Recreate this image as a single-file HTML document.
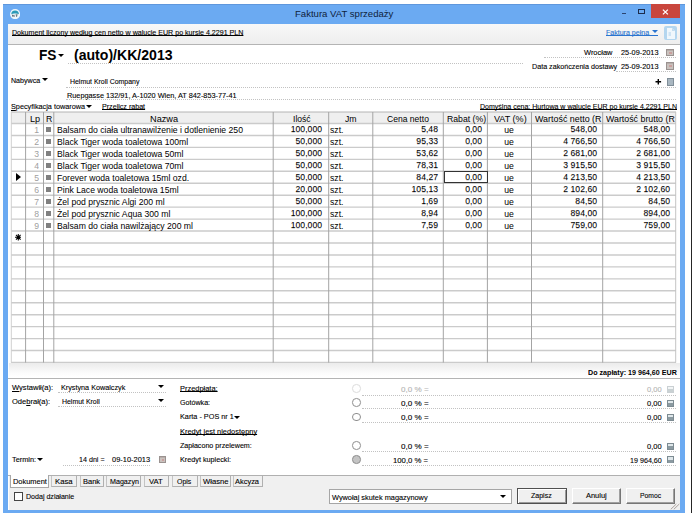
<!DOCTYPE html>
<html><head><meta charset="utf-8"><title>Faktura VAT sprzedaży</title>
<style>
html,body{margin:0;padding:0;background:#fff;}
body{width:692px;height:513px;position:relative;overflow:hidden;font-family:"Liberation Sans",sans-serif;font-size:7.05px;color:#000;}
.a{position:absolute;white-space:nowrap;line-height:1;}
.dot{position:absolute;height:0;border-top:1px dotted #bdbdbd;}
.hl{position:absolute;height:1px;}
.vl{position:absolute;width:1px;}
.btn{position:absolute;box-sizing:border-box;border:1px solid #fff;border-right-color:#767676;border-bottom-color:#767676;background:#f0f0f0;box-shadow:inset -1px -1px 0 #a0a0a0;}
.radio{position:absolute;box-sizing:border-box;border:1px solid #8e8e8e;border-radius:50%;background:#fff;}
</style></head><body>

<div class="a" style="left:3px;top:3.9px;width:682px;height:512.1px;background:#6baaf2;"></div>
<div class="a" style="left:3px;top:3.7px;width:682px;height:1.0px;background:#5f97dc;"></div>
<div class="a" style="left:690.7px;top:0px;width:1.2999999999999545px;height:513px;background:#262626;"></div>
<div class="a" style="top:9.36px;font-size:9.5px;color:#0f1e3c;transform:scaleX(1.0073);transform-origin:left center;left:294.70px;">Faktura VAT sprzedaży</div>
<svg class="a" style="left:9.8px;top:9.1px;" width="10.2" height="10.2" viewBox="0 0 20 20"><circle cx="10" cy="10" r="10" fill="#eef6fb"/><path d="M2.5 10.5 A7.5 7.5 0 0 1 17.5 10.5 Q14 8.5 10 9 Q6 8.5 2.5 10.5Z" fill="#2a9ab8"/><path d="M5 15V11.5L8 15V11.5M11 11.5H15M13 11.5V15.5" stroke="#4a5a66" stroke-width="1.6" fill="none"/></svg>
<div class="a" style="left:650.6px;top:4px;width:29.5px;height:13.8px;background:#c9463d;"></div>
<svg class="a" style="left:662.2px;top:8.7px;" width="6.8" height="6" viewBox="0 0 6.8 6"><path d="M0.9 0.6 L5.9 5.4 M5.9 0.6 L0.9 5.4" stroke="#fff" stroke-width="1.3" fill="none"/></svg>
<div class="a" style="left:638.2px;top:8.6px;width:7px;height:5px;box-sizing:border-box;border:0.8px solid #1c2c4c;border-top-width:1.7px;"></div>
<div class="a" style="left:621.6px;top:12.6px;width:4.600000000000023px;height:1.3000000000000007px;background:#2b4470;"></div>
<div class="a" style="left:8px;top:24px;width:672px;height:486px;background:#fff;"></div>
<div class="a" style="left:8px;top:24px;width:672px;height:20px;background:linear-gradient(#f8f8f8,#eeeeee);"></div>
<div class="hl" style="left:8px;top:43.8px;width:672px;background:#b4b4b4;"></div>
<div class="a" style="top:28.56px;font-size:7.05px;color:#000;-webkit-text-stroke:0.1px #000;transform:scaleX(1.0064);transform-origin:left center;text-decoration:underline;text-decoration-thickness:0.7px;text-underline-offset:0.4px;text-decoration-skip-ink:none;left:12.20px;">Dokument liczony według cen netto w walucie EUR po kursie 4,2291 PLN</div>
<div class="a" style="top:28.56px;font-size:7.05px;color:#2a74d0;-webkit-text-stroke:0.1px #2a74d0;text-decoration:underline;text-decoration-thickness:0.7px;text-underline-offset:0.4px;text-decoration-skip-ink:none;left:606.00px;">Faktura pełna</div>
<div class="a" style="left:651.6px;top:30.2px;width:0;height:0;border-left:3.25px solid transparent;border-right:3.25px solid transparent;border-top:3.099999999999998px solid #2a74d0;"></div>
<div class="a" style="left:648px;top:34.9px;width:10px;height:0.7000000000000028px;background:#2a74d0;"></div>
<div class="a" style="left:664.3px;top:26px;width:12.300000000000068px;height:14.399999999999999px;background:#b4d6ef;border-radius:2px;"></div>
<svg class="a" style="left:666.5px;top:27.8px;" width="8" height="11" viewBox="0 0 8 11"><path d="M0 0H5L8 3V11H0Z" fill="#f0f7fc"/><path d="M5 0V3H8" fill="#c4ddef"/><path d="M1.5 5H4M1.5 7H4" stroke="#aed1ec" stroke-width="1"/></svg>
<div class="a" style="top:48.17px;font-size:14px;color:#000;transform:scaleX(0.9782);transform-origin:left center;font-weight:bold;left:39.20px;">FS</div>
<div class="a" style="left:57.9px;top:53.6px;width:0;height:0;border-left:3.2500000000000036px solid transparent;border-right:3.2500000000000036px solid transparent;border-top:3.299999999999997px solid #000;"></div>
<div class="a" style="top:48.17px;font-size:14px;color:#000;transform:scaleX(1.0058);transform-origin:left center;font-weight:bold;left:74.40px;">(auto)/KK/2013</div>
<div class="dot" style="left:68px;top:62.5px;width:455px;border-top-color:#c2c2c2;"></div>
<div class="a" style="top:49.06px;font-size:7.05px;color:#000;-webkit-text-stroke:0.1px #000;transform:scaleX(1.0561);transform-origin:left center;left:583.70px;">Wrocław</div>
<div class="a" style="top:49.06px;font-size:7.05px;color:#000;-webkit-text-stroke:0.1px #000;transform:scaleX(1.0403);transform-origin:left center;left:621.00px;">25-09-2013</div>
<div class="a" style="left:666.2px;top:48.9px;width:8.199999999999932px;height:7.200000000000003px;background:#c9c2be;border:1px solid #9a9290;box-sizing:border-box;"></div>
<div class="a" style="left:667.2px;top:49.9px;width:6.199999999999932px;height:1.2000000000000028px;background:#b8aeaa;"></div>
<div class="a" style="left:669.0px;top:52.1px;width:2.6000000000000227px;height:1.7999999999999972px;background:#c9a09e;"></div>
<div class="dot" style="left:544px;top:57.1px;width:132px;border-top-color:#c2c2c2;"></div>
<div class="a" style="top:62.96px;font-size:7.05px;color:#000;-webkit-text-stroke:0.1px #000;transform:scaleX(1.0164);transform-origin:left center;left:531.70px;">Data zakończenia dostawy</div>
<div class="a" style="top:62.96px;font-size:7.05px;color:#000;-webkit-text-stroke:0.1px #000;transform:scaleX(1.0403);transform-origin:left center;left:621.00px;">25-09-2013</div>
<div class="a" style="left:666.2px;top:62.2px;width:8.199999999999932px;height:7.5px;background:#c9c2be;border:1px solid #9a9290;box-sizing:border-box;"></div>
<div class="a" style="left:667.2px;top:63.2px;width:6.199999999999932px;height:1.2000000000000028px;background:#b8aeaa;"></div>
<div class="a" style="left:669.0px;top:65.4px;width:2.6000000000000227px;height:2.0999999999999943px;background:#c9a09e;"></div>
<div class="dot" style="left:616px;top:70.5px;width:60px;border-top-color:#c2c2c2;"></div>
<div class="a" style="top:76.56px;font-size:7.05px;color:#000;-webkit-text-stroke:0.1px #000;transform:scaleX(1.004);transform-origin:left center;left:11.20px;">Nabywca</div>
<div class="a" style="left:41.6px;top:78.4px;width:0;height:0;border-left:3.1499999999999986px solid transparent;border-right:3.1499999999999986px solid transparent;border-top:3.299999999999997px solid #000;"></div>
<div class="a" style="top:78.26px;font-size:7.05px;color:#000;-webkit-text-stroke:0.1px #000;transform:scaleX(0.9844);transform-origin:left center;left:69.70px;">Helmut Kroll Company</div>
<div class="dot" style="left:66px;top:87.2px;width:610px;border-top-color:#c2c2c2;"></div>
<svg class="a" style="left:654px;top:77px;" width="9" height="9" viewBox="0 0 9 9"><path d="M1.5 4.8H7.1M4.3 2V7.6" stroke="#000" stroke-width="1.4" fill="none"/></svg>
<div class="a" style="left:666.9px;top:78px;width:6.899999999999977px;height:7.799999999999997px;background:#a9b7c1;border:1px solid #808e98;box-sizing:border-box;"></div>
<div class="a" style="top:91.86px;font-size:7.05px;color:#000;-webkit-text-stroke:0.1px #000;transform:scaleX(1.0379);transform-origin:left center;left:67.40px;">Ruepgasse 132/91, A-1020 Wien, AT 842-853-77-41</div>
<div class="dot" style="left:66px;top:98.9px;width:610px;border-top-color:#c2c2c2;"></div>
<div class="a" style="top:103.26px;font-size:7.05px;color:#000;-webkit-text-stroke:0.1px #000;transform:scaleX(1.0337);transform-origin:left center;left:11.20px;"><span style="text-decoration:underline">S</span>pecyfikacja towarowa</div>
<div class="a" style="left:86.39999999999999px;top:105px;width:0;height:0;border-left:3.250000000000007px solid transparent;border-right:3.250000000000007px solid transparent;border-top:3.299999999999997px solid #000;"></div>
<div class="a" style="top:103.26px;font-size:7.05px;color:#000;-webkit-text-stroke:0.1px #000;transform:scaleX(1.0097);transform-origin:left center;text-decoration:underline;text-decoration-thickness:0.7px;text-underline-offset:0.4px;text-decoration-skip-ink:none;left:102.20px;">Przelicz rabat</div>
<div class="a" style="top:103.06px;font-size:7.05px;color:#000;-webkit-text-stroke:0.1px #000;transform:scaleX(0.996);transform-origin:left center;text-decoration:underline;text-decoration-thickness:0.7px;text-underline-offset:0.4px;text-decoration-skip-ink:none;left:479.70px;">Domyślna cena: Hurtowa w walucie EUR po kursie 4,2291 PLN</div>
<svg class="a" style="left:0;top:0;" width="692" height="400" viewBox="0 0 692 400"><rect x="11" y="112" width="665" height="250.60000000000002" fill="#fff"/><rect x="11" y="112" width="665" height="11.5" fill="#efefef"/><path d="M11 112H676" stroke="#b4b4b4" stroke-width="1"/><path d="M11 123.50H676M11 135.45H676M11 147.40H676M11 159.35H676M11 171.30H676M11 183.25H676M11 195.20H676M11 207.15H676M11 219.10H676M11 231.05H676M11 243.00H676M11 254.95H676M11 266.90H676M11 278.85H676M11 290.80H676M11 302.75H676M11 314.70H676M11 326.65H676M11 338.60H676M11 350.55H676M11 362.50H676" stroke="#cbcbcb" stroke-width="1.4" fill="none"/><path d="M11.3 112V362.6" stroke="#d0d0d0" stroke-width="1" fill="none"/><path d="M25.6 112V362.6M43.5 112V362.6M53.8 112V362.6M273.2 112V362.6M328.7 112V362.6M372.8 112V362.6M443.3 112V362.6M487.4 112V362.6M531.5 112V362.6M602.7 112V362.6" stroke="#a4a4a4" stroke-width="1" fill="none"/><path d="M675.7 112V362.6" stroke="#c4c4c4" stroke-width="1" fill="none"/></svg>
<div class="a" style="top:114.51px;font-size:8.8px;color:#000;transform:scaleX(1.0309);transform-origin:left center;left:30.20px;">Lp</div>
<div class="a" style="top:114.51px;font-size:8.8px;color:#000;transform:scaleX(0.9907);transform-origin:left center;left:46.20px;">R</div>
<div class="a" style="top:114.51px;font-size:8.8px;color:#000;transform:scaleX(1.045);transform-origin:left center;left:149.70px;">Nazwa</div>
<div class="a" style="top:114.51px;font-size:8.8px;color:#000;transform:scaleX(0.9727);transform-origin:left center;left:292.50px;">Ilość</div>
<div class="a" style="top:114.51px;font-size:8.8px;color:#000;transform:scaleX(0.9885);transform-origin:left center;left:345.10px;">Jm</div>
<div class="a" style="top:114.51px;font-size:8.8px;color:#000;transform:scaleX(0.9734);transform-origin:left center;left:387.40px;">Cena netto</div>
<div class="a" style="top:114.51px;font-size:8.8px;color:#000;transform:scaleX(0.9871);transform-origin:left center;left:446.50px;">Rabat (%)</div>
<div class="a" style="top:114.51px;font-size:8.8px;color:#000;transform:scaleX(1.0289);transform-origin:left center;left:494.00px;">VAT (%)</div>
<div class="a" style="top:114.51px;font-size:8.8px;color:#000;transform:scaleX(1.0126);transform-origin:left center;left:535.00px;">Wartość netto (R</div>
<div class="a" style="top:114.51px;font-size:8.8px;color:#000;transform:scaleX(1.0028);transform-origin:left center;left:605.50px;">Wartość brutto (R</div>
<div class="a" style="top:124.96px;font-size:9.5px;color:#a0a0a0;transform:scaleX(0.91);transform-origin:right center;left:-360.60px;width:400px;text-align:right;">1</div>
<div class="a" style="left:46px;top:127.1px;width:5px;height:5.0px;background:#808080;"></div>
<div class="a" style="top:124.96px;font-size:9.5px;color:#000;transform:scaleX(0.91);transform-origin:left center;left:57.00px;">Balsam do ciała ultranawilżenie i dotlenienie 250</div>
<div class="a" style="top:124.46px;font-size:9.5px;color:#000;transform:scaleX(0.91);transform-origin:right center;left:-77.70px;width:400px;text-align:right;text-shadow:0 0.8px 0.4px rgba(0,0,0,.18);">100,000</div>
<div class="a" style="top:124.96px;font-size:9.5px;color:#000;transform:scaleX(0.91);transform-origin:left center;left:330.30px;">szt.</div>
<div class="a" style="top:124.46px;font-size:9.5px;color:#000;transform:scaleX(0.91);transform-origin:right center;left:37.80px;width:400px;text-align:right;text-shadow:0 0.8px 0.4px rgba(0,0,0,.18);">5,48</div>
<div class="a" style="top:124.46px;font-size:9.5px;color:#000;transform:scaleX(0.91);transform-origin:right center;left:81.70px;width:400px;text-align:right;text-shadow:0 0.8px 0.4px rgba(0,0,0,.18);">0,00</div>
<div class="a" style="top:124.96px;font-size:9.5px;color:#000;transform:scaleX(0.91);transform-origin:center center;left:309.45px;width:400px;text-align:center;">ue</div>
<div class="a" style="top:124.46px;font-size:9.5px;color:#000;transform:scaleX(0.91);transform-origin:right center;left:196.60px;width:400px;text-align:right;text-shadow:0 0.8px 0.4px rgba(0,0,0,.18);">548,00</div>
<div class="a" style="top:124.46px;font-size:9.5px;color:#000;transform:scaleX(0.91);transform-origin:right center;left:269.90px;width:400px;text-align:right;text-shadow:0 0.8px 0.4px rgba(0,0,0,.18);">548,00</div>
<div class="a" style="top:136.96px;font-size:9.5px;color:#a0a0a0;transform:scaleX(0.91);transform-origin:right center;left:-360.60px;width:400px;text-align:right;">2</div>
<div class="a" style="left:46px;top:139.1px;width:5px;height:5.0px;background:#808080;"></div>
<div class="a" style="top:136.96px;font-size:9.5px;color:#000;transform:scaleX(0.91);transform-origin:left center;left:57.00px;">Black Tiger woda toaletowa 100ml</div>
<div class="a" style="top:136.46px;font-size:9.5px;color:#000;transform:scaleX(0.91);transform-origin:right center;left:-77.70px;width:400px;text-align:right;text-shadow:0 0.8px 0.4px rgba(0,0,0,.18);">50,000</div>
<div class="a" style="top:136.96px;font-size:9.5px;color:#000;transform:scaleX(0.91);transform-origin:left center;left:330.30px;">szt.</div>
<div class="a" style="top:136.46px;font-size:9.5px;color:#000;transform:scaleX(0.91);transform-origin:right center;left:37.80px;width:400px;text-align:right;text-shadow:0 0.8px 0.4px rgba(0,0,0,.18);">95,33</div>
<div class="a" style="top:136.46px;font-size:9.5px;color:#000;transform:scaleX(0.91);transform-origin:right center;left:81.70px;width:400px;text-align:right;text-shadow:0 0.8px 0.4px rgba(0,0,0,.18);">0,00</div>
<div class="a" style="top:136.96px;font-size:9.5px;color:#000;transform:scaleX(0.91);transform-origin:center center;left:309.45px;width:400px;text-align:center;">ue</div>
<div class="a" style="top:136.46px;font-size:9.5px;color:#000;transform:scaleX(0.91);transform-origin:right center;left:196.60px;width:400px;text-align:right;text-shadow:0 0.8px 0.4px rgba(0,0,0,.18);">4 766,50</div>
<div class="a" style="top:136.46px;font-size:9.5px;color:#000;transform:scaleX(0.91);transform-origin:right center;left:269.90px;width:400px;text-align:right;text-shadow:0 0.8px 0.4px rgba(0,0,0,.18);">4 766,50</div>
<div class="a" style="top:148.96px;font-size:9.5px;color:#a0a0a0;transform:scaleX(0.91);transform-origin:right center;left:-360.60px;width:400px;text-align:right;">3</div>
<div class="a" style="left:46px;top:151.1px;width:5px;height:5.0px;background:#808080;"></div>
<div class="a" style="top:148.96px;font-size:9.5px;color:#000;transform:scaleX(0.91);transform-origin:left center;left:57.00px;">Black Tiger woda toaletowa 50ml</div>
<div class="a" style="top:148.46px;font-size:9.5px;color:#000;transform:scaleX(0.91);transform-origin:right center;left:-77.70px;width:400px;text-align:right;text-shadow:0 0.8px 0.4px rgba(0,0,0,.18);">50,000</div>
<div class="a" style="top:148.96px;font-size:9.5px;color:#000;transform:scaleX(0.91);transform-origin:left center;left:330.30px;">szt.</div>
<div class="a" style="top:148.46px;font-size:9.5px;color:#000;transform:scaleX(0.91);transform-origin:right center;left:37.80px;width:400px;text-align:right;text-shadow:0 0.8px 0.4px rgba(0,0,0,.18);">53,62</div>
<div class="a" style="top:148.46px;font-size:9.5px;color:#000;transform:scaleX(0.91);transform-origin:right center;left:81.70px;width:400px;text-align:right;text-shadow:0 0.8px 0.4px rgba(0,0,0,.18);">0,00</div>
<div class="a" style="top:148.96px;font-size:9.5px;color:#000;transform:scaleX(0.91);transform-origin:center center;left:309.45px;width:400px;text-align:center;">ue</div>
<div class="a" style="top:148.46px;font-size:9.5px;color:#000;transform:scaleX(0.91);transform-origin:right center;left:196.60px;width:400px;text-align:right;text-shadow:0 0.8px 0.4px rgba(0,0,0,.18);">2 681,00</div>
<div class="a" style="top:148.46px;font-size:9.5px;color:#000;transform:scaleX(0.91);transform-origin:right center;left:269.90px;width:400px;text-align:right;text-shadow:0 0.8px 0.4px rgba(0,0,0,.18);">2 681,00</div>
<div class="a" style="top:160.96px;font-size:9.5px;color:#a0a0a0;transform:scaleX(0.91);transform-origin:right center;left:-360.60px;width:400px;text-align:right;">4</div>
<div class="a" style="left:46px;top:163.1px;width:5px;height:5.0px;background:#808080;"></div>
<div class="a" style="top:160.96px;font-size:9.5px;color:#000;transform:scaleX(0.91);transform-origin:left center;left:57.00px;">Black Tiger woda toaletowa 70ml</div>
<div class="a" style="top:160.46px;font-size:9.5px;color:#000;transform:scaleX(0.91);transform-origin:right center;left:-77.70px;width:400px;text-align:right;text-shadow:0 0.8px 0.4px rgba(0,0,0,.18);">50,000</div>
<div class="a" style="top:160.96px;font-size:9.5px;color:#000;transform:scaleX(0.91);transform-origin:left center;left:330.30px;">szt.</div>
<div class="a" style="top:160.46px;font-size:9.5px;color:#000;transform:scaleX(0.91);transform-origin:right center;left:37.80px;width:400px;text-align:right;text-shadow:0 0.8px 0.4px rgba(0,0,0,.18);">78,31</div>
<div class="a" style="top:160.46px;font-size:9.5px;color:#000;transform:scaleX(0.91);transform-origin:right center;left:81.70px;width:400px;text-align:right;text-shadow:0 0.8px 0.4px rgba(0,0,0,.18);">0,00</div>
<div class="a" style="top:160.96px;font-size:9.5px;color:#000;transform:scaleX(0.91);transform-origin:center center;left:309.45px;width:400px;text-align:center;">ue</div>
<div class="a" style="top:160.46px;font-size:9.5px;color:#000;transform:scaleX(0.91);transform-origin:right center;left:196.60px;width:400px;text-align:right;text-shadow:0 0.8px 0.4px rgba(0,0,0,.18);">3 915,50</div>
<div class="a" style="top:160.46px;font-size:9.5px;color:#000;transform:scaleX(0.91);transform-origin:right center;left:269.90px;width:400px;text-align:right;text-shadow:0 0.8px 0.4px rgba(0,0,0,.18);">3 915,50</div>
<div class="a" style="top:172.96px;font-size:9.5px;color:#a0a0a0;transform:scaleX(0.91);transform-origin:right center;left:-360.60px;width:400px;text-align:right;">5</div>
<div class="a" style="left:46px;top:175.1px;width:5px;height:5.0px;background:#808080;"></div>
<div class="a" style="top:172.96px;font-size:9.5px;color:#000;transform:scaleX(0.91);transform-origin:left center;left:57.00px;">Forever woda toaletowa 15ml ozd.</div>
<div class="a" style="top:172.46px;font-size:9.5px;color:#000;transform:scaleX(0.91);transform-origin:right center;left:-77.70px;width:400px;text-align:right;text-shadow:0 0.8px 0.4px rgba(0,0,0,.18);">50,000</div>
<div class="a" style="top:172.96px;font-size:9.5px;color:#000;transform:scaleX(0.91);transform-origin:left center;left:330.30px;">szt.</div>
<div class="a" style="top:172.46px;font-size:9.5px;color:#000;transform:scaleX(0.91);transform-origin:right center;left:37.80px;width:400px;text-align:right;text-shadow:0 0.8px 0.4px rgba(0,0,0,.18);">84,27</div>
<div class="a" style="top:172.46px;font-size:9.5px;color:#000;transform:scaleX(0.91);transform-origin:right center;left:81.70px;width:400px;text-align:right;text-shadow:0 0.8px 0.4px rgba(0,0,0,.18);">0,00</div>
<div class="a" style="top:172.96px;font-size:9.5px;color:#000;transform:scaleX(0.91);transform-origin:center center;left:309.45px;width:400px;text-align:center;">ue</div>
<div class="a" style="top:172.46px;font-size:9.5px;color:#000;transform:scaleX(0.91);transform-origin:right center;left:196.60px;width:400px;text-align:right;text-shadow:0 0.8px 0.4px rgba(0,0,0,.18);">4 213,50</div>
<div class="a" style="top:172.46px;font-size:9.5px;color:#000;transform:scaleX(0.91);transform-origin:right center;left:269.90px;width:400px;text-align:right;text-shadow:0 0.8px 0.4px rgba(0,0,0,.18);">4 213,50</div>
<div class="a" style="top:184.96px;font-size:9.5px;color:#a0a0a0;transform:scaleX(0.91);transform-origin:right center;left:-360.60px;width:400px;text-align:right;">6</div>
<div class="a" style="left:46px;top:187.1px;width:5px;height:5.0px;background:#808080;"></div>
<div class="a" style="top:184.96px;font-size:9.5px;color:#000;transform:scaleX(0.91);transform-origin:left center;left:57.00px;">Pink Lace woda toaletowa 15ml</div>
<div class="a" style="top:184.46px;font-size:9.5px;color:#000;transform:scaleX(0.91);transform-origin:right center;left:-77.70px;width:400px;text-align:right;text-shadow:0 0.8px 0.4px rgba(0,0,0,.18);">20,000</div>
<div class="a" style="top:184.96px;font-size:9.5px;color:#000;transform:scaleX(0.91);transform-origin:left center;left:330.30px;">szt.</div>
<div class="a" style="top:184.46px;font-size:9.5px;color:#000;transform:scaleX(0.91);transform-origin:right center;left:37.80px;width:400px;text-align:right;text-shadow:0 0.8px 0.4px rgba(0,0,0,.18);">105,13</div>
<div class="a" style="top:184.46px;font-size:9.5px;color:#000;transform:scaleX(0.91);transform-origin:right center;left:81.70px;width:400px;text-align:right;text-shadow:0 0.8px 0.4px rgba(0,0,0,.18);">0,00</div>
<div class="a" style="top:184.96px;font-size:9.5px;color:#000;transform:scaleX(0.91);transform-origin:center center;left:309.45px;width:400px;text-align:center;">ue</div>
<div class="a" style="top:184.46px;font-size:9.5px;color:#000;transform:scaleX(0.91);transform-origin:right center;left:196.60px;width:400px;text-align:right;text-shadow:0 0.8px 0.4px rgba(0,0,0,.18);">2 102,60</div>
<div class="a" style="top:184.46px;font-size:9.5px;color:#000;transform:scaleX(0.91);transform-origin:right center;left:269.90px;width:400px;text-align:right;text-shadow:0 0.8px 0.4px rgba(0,0,0,.18);">2 102,60</div>
<div class="a" style="top:196.96px;font-size:9.5px;color:#a0a0a0;transform:scaleX(0.91);transform-origin:right center;left:-360.60px;width:400px;text-align:right;">7</div>
<div class="a" style="left:46px;top:199.1px;width:5px;height:5.0px;background:#808080;"></div>
<div class="a" style="top:196.96px;font-size:9.5px;color:#000;transform:scaleX(0.91);transform-origin:left center;left:57.00px;">Żel pod prysznic Algi 200 ml</div>
<div class="a" style="top:196.46px;font-size:9.5px;color:#000;transform:scaleX(0.91);transform-origin:right center;left:-77.70px;width:400px;text-align:right;text-shadow:0 0.8px 0.4px rgba(0,0,0,.18);">50,000</div>
<div class="a" style="top:196.96px;font-size:9.5px;color:#000;transform:scaleX(0.91);transform-origin:left center;left:330.30px;">szt.</div>
<div class="a" style="top:196.46px;font-size:9.5px;color:#000;transform:scaleX(0.91);transform-origin:right center;left:37.80px;width:400px;text-align:right;text-shadow:0 0.8px 0.4px rgba(0,0,0,.18);">1,69</div>
<div class="a" style="top:196.46px;font-size:9.5px;color:#000;transform:scaleX(0.91);transform-origin:right center;left:81.70px;width:400px;text-align:right;text-shadow:0 0.8px 0.4px rgba(0,0,0,.18);">0,00</div>
<div class="a" style="top:196.96px;font-size:9.5px;color:#000;transform:scaleX(0.91);transform-origin:center center;left:309.45px;width:400px;text-align:center;">ue</div>
<div class="a" style="top:196.46px;font-size:9.5px;color:#000;transform:scaleX(0.91);transform-origin:right center;left:196.60px;width:400px;text-align:right;text-shadow:0 0.8px 0.4px rgba(0,0,0,.18);">84,50</div>
<div class="a" style="top:196.46px;font-size:9.5px;color:#000;transform:scaleX(0.91);transform-origin:right center;left:269.90px;width:400px;text-align:right;text-shadow:0 0.8px 0.4px rgba(0,0,0,.18);">84,50</div>
<div class="a" style="top:208.96px;font-size:9.5px;color:#a0a0a0;transform:scaleX(0.91);transform-origin:right center;left:-360.60px;width:400px;text-align:right;">8</div>
<div class="a" style="left:46px;top:211.1px;width:5px;height:5.0px;background:#808080;"></div>
<div class="a" style="top:208.96px;font-size:9.5px;color:#000;transform:scaleX(0.91);transform-origin:left center;left:57.00px;">Żel pod prysznic Aqua 300 ml</div>
<div class="a" style="top:208.46px;font-size:9.5px;color:#000;transform:scaleX(0.91);transform-origin:right center;left:-77.70px;width:400px;text-align:right;text-shadow:0 0.8px 0.4px rgba(0,0,0,.18);">100,000</div>
<div class="a" style="top:208.96px;font-size:9.5px;color:#000;transform:scaleX(0.91);transform-origin:left center;left:330.30px;">szt.</div>
<div class="a" style="top:208.46px;font-size:9.5px;color:#000;transform:scaleX(0.91);transform-origin:right center;left:37.80px;width:400px;text-align:right;text-shadow:0 0.8px 0.4px rgba(0,0,0,.18);">8,94</div>
<div class="a" style="top:208.46px;font-size:9.5px;color:#000;transform:scaleX(0.91);transform-origin:right center;left:81.70px;width:400px;text-align:right;text-shadow:0 0.8px 0.4px rgba(0,0,0,.18);">0,00</div>
<div class="a" style="top:208.96px;font-size:9.5px;color:#000;transform:scaleX(0.91);transform-origin:center center;left:309.45px;width:400px;text-align:center;">ue</div>
<div class="a" style="top:208.46px;font-size:9.5px;color:#000;transform:scaleX(0.91);transform-origin:right center;left:196.60px;width:400px;text-align:right;text-shadow:0 0.8px 0.4px rgba(0,0,0,.18);">894,00</div>
<div class="a" style="top:208.46px;font-size:9.5px;color:#000;transform:scaleX(0.91);transform-origin:right center;left:269.90px;width:400px;text-align:right;text-shadow:0 0.8px 0.4px rgba(0,0,0,.18);">894,00</div>
<div class="a" style="top:220.96px;font-size:9.5px;color:#a0a0a0;transform:scaleX(0.91);transform-origin:right center;left:-360.60px;width:400px;text-align:right;">9</div>
<div class="a" style="left:46px;top:223.1px;width:5px;height:5.0px;background:#808080;"></div>
<div class="a" style="top:220.96px;font-size:9.5px;color:#000;transform:scaleX(0.91);transform-origin:left center;left:57.00px;">Balsam do ciała nawilżający 200 ml</div>
<div class="a" style="top:220.46px;font-size:9.5px;color:#000;transform:scaleX(0.91);transform-origin:right center;left:-77.70px;width:400px;text-align:right;text-shadow:0 0.8px 0.4px rgba(0,0,0,.18);">100,000</div>
<div class="a" style="top:220.96px;font-size:9.5px;color:#000;transform:scaleX(0.91);transform-origin:left center;left:330.30px;">szt.</div>
<div class="a" style="top:220.46px;font-size:9.5px;color:#000;transform:scaleX(0.91);transform-origin:right center;left:37.80px;width:400px;text-align:right;text-shadow:0 0.8px 0.4px rgba(0,0,0,.18);">7,59</div>
<div class="a" style="top:220.46px;font-size:9.5px;color:#000;transform:scaleX(0.91);transform-origin:right center;left:81.70px;width:400px;text-align:right;text-shadow:0 0.8px 0.4px rgba(0,0,0,.18);">0,00</div>
<div class="a" style="top:220.96px;font-size:9.5px;color:#000;transform:scaleX(0.91);transform-origin:center center;left:309.45px;width:400px;text-align:center;">ue</div>
<div class="a" style="top:220.46px;font-size:9.5px;color:#000;transform:scaleX(0.91);transform-origin:right center;left:196.60px;width:400px;text-align:right;text-shadow:0 0.8px 0.4px rgba(0,0,0,.18);">759,00</div>
<div class="a" style="top:220.46px;font-size:9.5px;color:#000;transform:scaleX(0.91);transform-origin:right center;left:269.90px;width:400px;text-align:right;text-shadow:0 0.8px 0.4px rgba(0,0,0,.18);">759,00</div>
<div class="a" style="left:16px;top:173.3px;width:0;height:0;border-top:4.2px solid transparent;border-bottom:4.2px solid transparent;border-left:5px solid #000;"></div>
<div class="a" style="left:443.5px;top:171px;width:44.5px;height:12px;border:1px solid #333;box-sizing:border-box;"></div>
<svg class="a" style="left:14.8px;top:234px;" width="6.6" height="6.6" viewBox="0 0 10 10"><path d="M5 0V10M0 5H10M1.5 1.5L8.5 8.5M8.5 1.5L1.5 8.5" stroke="#000" stroke-width="1.6"/><circle cx="5" cy="5" r="2" fill="#000"/></svg>
<div class="a" style="left:8.6px;top:363.1px;width:671.0px;height:14.399999999999977px;background:linear-gradient(#ebebeb,#fbfbfb 70%,#fff);"></div>
<div class="a" style="top:368.56px;font-size:7.05px;color:#000;transform:scaleX(1.0121);transform-origin:left center;font-weight:bold;left:587.50px;">Do zapłaty: 19 964,60 EUR</div>
<div class="hl" style="left:8px;top:377.5px;width:672px;background:#b4b4b4;"></div>
<div class="a" style="top:383.56px;font-size:7.05px;color:#000;-webkit-text-stroke:0.1px #000;transform:scaleX(1.0728);transform-origin:left center;left:12.20px;"><span style="text-decoration:underline">W</span>ystawił(a):</div>
<div class="a" style="top:383.56px;font-size:7.05px;color:#000;-webkit-text-stroke:0.1px #000;transform:scaleX(1.026);transform-origin:left center;left:60.50px;">Krystyna Kowalczyk</div>
<div class="a" style="left:157.6px;top:385px;width:0;height:0;border-left:3.6500000000000057px solid transparent;border-right:3.6500000000000057px solid transparent;border-top:3.6000000000000227px solid #000;"></div>
<div class="dot" style="left:58px;top:392.2px;width:108px;border-top-color:#c2c2c2;"></div>
<div class="a" style="top:397.56px;font-size:7.05px;color:#000;-webkit-text-stroke:0.1px #000;transform:scaleX(1.0685);transform-origin:left center;left:12.20px;">Ode<span style="text-decoration:underline">b</span>rał(a):</div>
<div class="a" style="top:397.56px;font-size:7.05px;color:#000;-webkit-text-stroke:0.1px #000;transform:scaleX(0.9846);transform-origin:left center;left:62.20px;">Helmut Kroll</div>
<div class="a" style="left:157.6px;top:399.3px;width:0;height:0;border-left:3.6500000000000057px solid transparent;border-right:3.6500000000000057px solid transparent;border-top:3.6000000000000227px solid #000;"></div>
<div class="dot" style="left:58px;top:406.3px;width:108px;border-top-color:#c2c2c2;"></div>
<div class="a" style="top:456.16px;font-size:7.05px;color:#000;-webkit-text-stroke:0.1px #000;transform:scaleX(1.0429);transform-origin:left center;left:12.20px;">Termin:</div>
<div class="a" style="left:37.1px;top:458px;width:0;height:0;border-left:3.25px solid transparent;border-right:3.25px solid transparent;border-top:3.3000000000000114px solid #000;"></div>
<div class="a" style="top:456.16px;font-size:7.05px;color:#000;-webkit-text-stroke:0.1px #000;transform:scaleX(1.0126);transform-origin:left center;left:78.50px;">14 dni =</div>
<div class="a" style="top:456.16px;font-size:7.05px;color:#000;-webkit-text-stroke:0.1px #000;transform:scaleX(1.057);transform-origin:left center;left:111.70px;">09-10-2013</div>
<div class="a" style="left:159.2px;top:455.8px;width:7.200000000000017px;height:7.699999999999989px;background:#c9c2be;border:1px solid #9a9290;box-sizing:border-box;"></div>
<div class="a" style="left:160.2px;top:456.8px;width:5.200000000000017px;height:1.1999999999999886px;background:#b8aeaa;"></div>
<div class="a" style="left:162.0px;top:459.0px;width:1.5999999999999943px;height:2.3000000000000114px;background:#c9a09e;"></div>
<div class="dot" style="left:62.5px;top:465.0px;width:87.5px;border-top-color:#c2c2c2;"></div>
<div class="a" style="top:385.36px;font-size:7.05px;color:#000;-webkit-text-stroke:0.1px #000;transform:scaleX(1.0545);transform-origin:left center;text-decoration:underline;text-decoration-thickness:0.7px;text-underline-offset:0.4px;text-decoration-skip-ink:none;left:180.20px;">Przedpłata:</div>
<div class="radio" style="left:352.2px;top:384.4px;width:8.6px;height:8.6px;border-color:#dcdcdc;background:#fff;"></div>
<div class="a" style="top:385.76px;font-size:7.05px;color:#b4b4b4;-webkit-text-stroke:0.1px #b4b4b4;transform:scaleX(1.1455);transform-origin:left center;left:400.70px;">0,0 % =</div>
<div class="a" style="top:385.76px;font-size:7.05px;color:#b4b4b4;-webkit-text-stroke:0.1px #b4b4b4;transform:scaleX(1.0642);transform-origin:left center;left:646.70px;">0,00</div>
<div class="a" style="left:667.2px;top:385.5px;width:6.899999999999977px;height:7.199999999999989px;background:#dfe7ea;border:1px solid #7d8b92;box-sizing:border-box;opacity:0.4;"></div>
<div class="a" style="left:668.2px;top:388.7px;width:4.899999999999977px;height:3.0px;background:#8b9aa1;opacity:0.4;"></div>
<div class="dot" style="left:362px;top:394.5px;width:314px;border-top-color:#c2c2c2;"></div>
<div class="a" style="top:399.36px;font-size:7.05px;color:#000;-webkit-text-stroke:0.1px #000;transform:scaleX(1.0107);transform-origin:left center;left:180.20px;">Gotówka:</div>
<div class="radio" style="left:352.2px;top:398.4px;width:8.6px;height:8.6px;border-color:#8e8e8e;background:#fff;"></div>
<div class="a" style="top:399.76px;font-size:7.05px;color:#000;-webkit-text-stroke:0.1px #000;transform:scaleX(1.1455);transform-origin:left center;left:400.70px;">0,0 % =</div>
<div class="a" style="top:399.76px;font-size:7.05px;color:#000;-webkit-text-stroke:0.1px #000;transform:scaleX(1.0642);transform-origin:left center;left:646.70px;">0,00</div>
<div class="a" style="left:667.2px;top:399.5px;width:6.899999999999977px;height:7.199999999999989px;background:#dfe7ea;border:1px solid #7d8b92;box-sizing:border-box;opacity:1;"></div>
<div class="a" style="left:668.2px;top:402.7px;width:4.899999999999977px;height:3.0px;background:#8b9aa1;opacity:1;"></div>
<div class="dot" style="left:362px;top:408.3px;width:314px;border-top-color:#c2c2c2;"></div>
<div class="a" style="top:413.36px;font-size:7.05px;color:#000;-webkit-text-stroke:0.1px #000;transform:scaleX(1.0328);transform-origin:left center;left:180.20px;">Karta - POS nr 1</div>
<div class="radio" style="left:352.2px;top:412.7px;width:8.6px;height:8.6px;border-color:#8e8e8e;background:#fff;"></div>
<div class="a" style="top:414.06px;font-size:7.05px;color:#000;-webkit-text-stroke:0.1px #000;transform:scaleX(1.1455);transform-origin:left center;left:400.70px;">0,0 % =</div>
<div class="a" style="top:414.06px;font-size:7.05px;color:#000;-webkit-text-stroke:0.1px #000;transform:scaleX(1.0642);transform-origin:left center;left:646.70px;">0,00</div>
<div class="a" style="left:667.2px;top:413.8px;width:6.899999999999977px;height:7.199999999999989px;background:#dfe7ea;border:1px solid #7d8b92;box-sizing:border-box;opacity:1;"></div>
<div class="a" style="left:668.2px;top:417.0px;width:4.899999999999977px;height:3.0px;background:#8b9aa1;opacity:1;"></div>
<div class="dot" style="left:362px;top:422.0px;width:314px;border-top-color:#c2c2c2;"></div>
<div class="a" style="top:427.56px;font-size:7.05px;color:#000;-webkit-text-stroke:0.1px #000;transform:scaleX(1.0523);transform-origin:left center;text-decoration:underline;text-decoration-thickness:0.7px;text-underline-offset:0.4px;text-decoration-skip-ink:none;left:180.20px;">Kredyt jest niedostępny</div>
<div class="a" style="top:442.16px;font-size:7.05px;color:#000;-webkit-text-stroke:0.1px #000;transform:scaleX(1.0126);transform-origin:left center;left:180.20px;">Zapłacono przelewem:</div>
<div class="radio" style="left:352.2px;top:441.4px;width:8.6px;height:8.6px;border-color:#8e8e8e;background:#fff;"></div>
<div class="a" style="top:442.76px;font-size:7.05px;color:#000;-webkit-text-stroke:0.1px #000;transform:scaleX(1.1455);transform-origin:left center;left:400.70px;">0,0 % =</div>
<div class="a" style="top:442.76px;font-size:7.05px;color:#000;-webkit-text-stroke:0.1px #000;transform:scaleX(1.0642);transform-origin:left center;left:646.70px;">0,00</div>
<div class="a" style="left:667.2px;top:442.5px;width:6.899999999999977px;height:7.199999999999989px;background:#dfe7ea;border:1px solid #7d8b92;box-sizing:border-box;opacity:1;"></div>
<div class="a" style="left:668.2px;top:445.7px;width:4.899999999999977px;height:3.0px;background:#8b9aa1;opacity:1;"></div>
<div class="dot" style="left:362px;top:450.5px;width:314px;border-top-color:#c2c2c2;"></div>
<div class="a" style="top:456.16px;font-size:7.05px;color:#000;-webkit-text-stroke:0.1px #000;transform:scaleX(1.0271);transform-origin:left center;left:180.20px;">Kredyt kupiecki:</div>
<div class="radio" style="left:352.2px;top:455.2px;width:8.6px;height:8.6px;border-color:#8e8e8e;background:#c4c4c4;"></div>
<div class="a" style="top:456.56px;font-size:7.05px;color:#000;-webkit-text-stroke:0.1px #000;transform:scaleX(1.099);transform-origin:left center;left:393.20px;">100,0 % =</div>
<div class="a" style="top:456.56px;font-size:7.05px;color:#000;-webkit-text-stroke:0.1px #000;transform:scaleX(1.0141);transform-origin:left center;left:629.50px;">19 964,60</div>
<div class="a" style="left:667.2px;top:456.3px;width:6.899999999999977px;height:7.199999999999989px;background:#dfe7ea;border:1px solid #7d8b92;box-sizing:border-box;opacity:1;"></div>
<div class="a" style="left:668.2px;top:459.5px;width:4.899999999999977px;height:3.0px;background:#8b9aa1;opacity:1;"></div>
<div class="dot" style="left:362px;top:465.0px;width:314px;border-top-color:#c2c2c2;"></div>
<div class="a" style="left:233.9px;top:415.6px;width:0;height:0;border-left:3.5px solid transparent;border-right:3.5px solid transparent;border-top:3.5px solid #000;"></div>
<div class="a" style="left:8.6px;top:475px;width:671.0px;height:34.69999999999999px;background:#f0f0f0;"></div>
<div class="hl" style="left:8px;top:474.5px;width:672px;background:#b0b0b0;"></div>
<div class="a" style="left:10px;top:474.5px;width:39px;height:13.100000000000023px;background:#fff;box-sizing:border-box;border:1px solid #a8a8a8;border-top:none;"></div>
<div class="a" style="top:477.86px;font-size:7.05px;color:#000;-webkit-text-stroke:0.1px #000;transform:scaleX(1.0553);transform-origin:left center;left:12.70px;">Dokument</div>
<div class="a" style="left:50.6px;top:475.5px;width:26.699999999999996px;height:11.699999999999989px;background:#f0f0f0;box-sizing:border-box;border:1px solid #c4c4c4;border-top:none;border-right-color:#b0b0b0;border-bottom-color:#b0b0b0;"></div>
<div class="a" style="top:477.86px;font-size:7.05px;color:#000;-webkit-text-stroke:0.1px #000;transform:scaleX(1.0957);transform-origin:left center;left:55.20px;">Kasa</div>
<div class="a" style="left:80px;top:475.5px;width:24px;height:11.699999999999989px;background:#f0f0f0;box-sizing:border-box;border:1px solid #c4c4c4;border-top:none;border-right-color:#b0b0b0;border-bottom-color:#b0b0b0;"></div>
<div class="a" style="top:477.86px;font-size:7.05px;color:#000;-webkit-text-stroke:0.1px #000;transform:scaleX(1.0646);transform-origin:left center;left:82.70px;">Bank</div>
<div class="a" style="left:106px;top:475.5px;width:35.19999999999999px;height:11.699999999999989px;background:#f0f0f0;box-sizing:border-box;border:1px solid #c4c4c4;border-top:none;border-right-color:#b0b0b0;border-bottom-color:#b0b0b0;"></div>
<div class="a" style="top:477.86px;font-size:7.05px;color:#000;-webkit-text-stroke:0.1px #000;transform:scaleX(1.0107);transform-origin:left center;left:109.70px;">Magazyn</div>
<div class="a" style="left:143.8px;top:475.5px;width:25.69999999999999px;height:11.699999999999989px;background:#f0f0f0;box-sizing:border-box;border:1px solid #c4c4c4;border-top:none;border-right-color:#b0b0b0;border-bottom-color:#b0b0b0;"></div>
<div class="a" style="top:477.86px;font-size:7.05px;color:#000;-webkit-text-stroke:0.1px #000;transform:scaleX(1.089);transform-origin:left center;left:148.90px;">VAT</div>
<div class="a" style="left:171.5px;top:475.5px;width:26.30000000000001px;height:11.699999999999989px;background:#f0f0f0;box-sizing:border-box;border:1px solid #c4c4c4;border-top:none;border-right-color:#b0b0b0;border-bottom-color:#b0b0b0;"></div>
<div class="a" style="top:477.86px;font-size:7.05px;color:#000;-webkit-text-stroke:0.1px #000;transform:scaleX(0.9862);transform-origin:left center;left:176.70px;">Opis</div>
<div class="a" style="left:199.8px;top:475.5px;width:31.0px;height:11.699999999999989px;background:#f0f0f0;box-sizing:border-box;border:1px solid #c4c4c4;border-top:none;border-right-color:#b0b0b0;border-bottom-color:#b0b0b0;"></div>
<div class="a" style="top:477.86px;font-size:7.05px;color:#000;-webkit-text-stroke:0.1px #000;transform:scaleX(1.0851);transform-origin:left center;left:202.60px;">Własne</div>
<div class="a" style="left:232.8px;top:475.5px;width:29.80000000000001px;height:11.699999999999989px;background:#f0f0f0;box-sizing:border-box;border:1px solid #c4c4c4;border-top:none;border-right-color:#b0b0b0;border-bottom-color:#b0b0b0;"></div>
<div class="a" style="top:477.86px;font-size:7.05px;color:#000;-webkit-text-stroke:0.1px #000;transform:scaleX(1.0564);transform-origin:left center;left:235.40px;">Akcyza</div>
<div class="a" style="left:14.3px;top:492.3px;width:8.7px;height:8.399999999999977px;background:#fff;box-sizing:border-box;border:1px solid #444;"></div>
<div class="a" style="top:493.06px;font-size:7.05px;color:#000;-webkit-text-stroke:0.1px #000;transform:scaleX(1.0023);transform-origin:left center;left:26.00px;">Dodaj działanie</div>
<div class="a" style="left:329.2px;top:488.8px;width:183.2px;height:15.399999999999977px;background:#fff;box-sizing:border-box;border:1px solid #a6a6a6;"></div>
<div class="a" style="top:493.76px;font-size:7.05px;color:#000;-webkit-text-stroke:0.1px #000;transform:scaleX(1.0437);transform-origin:left center;left:331.70px;">Wywołaj skutek magazynowy</div>
<div class="a" style="left:500.40000000000003px;top:495.3px;width:0;height:0;border-left:3.849999999999966px solid transparent;border-right:3.849999999999966px solid transparent;border-top:3.8000000000000114px solid #000;"></div>
<div class="a" style="left:517px;top:487.8px;width:50px;height:15.800000000000011px;background:#f0f0f0;box-sizing:border-box;border:1px solid #505050;box-shadow:inset 1px 1px 0 #fff, inset -1px -1px 0 #9a9a9a;"></div>
<div class="a" style="top:492.16px;font-size:7.05px;color:#000;-webkit-text-stroke:0.1px #000;transform:scaleX(0.9968);transform-origin:left center;left:531.30px;">Zapisz</div>
<div class="btn" style="left:571.5px;top:487.8px;width:49.200000000000045px;height:15.8px;"></div>
<div class="a" style="top:492.16px;font-size:7.05px;color:#000;-webkit-text-stroke:0.1px #000;transform:scaleX(1.0565);transform-origin:left center;left:585.50px;">Anuluj</div>
<div class="btn" style="left:625.5px;top:487.8px;width:49.5px;height:15.8px;"></div>
<div class="a" style="top:492.16px;font-size:7.05px;color:#000;-webkit-text-stroke:0.1px #000;transform:scaleX(0.9618);transform-origin:left center;left:639.70px;">Pomoc</div>
<svg class="a" style="left:670px;top:503px;" width="10" height="7" viewBox="0 0 10 7"><path d="M0.8 6.3 L6.3 1 M3.8 6.3 L9.3 1" stroke="#a39a94" stroke-width="0.9"/></svg>
</body></html>
